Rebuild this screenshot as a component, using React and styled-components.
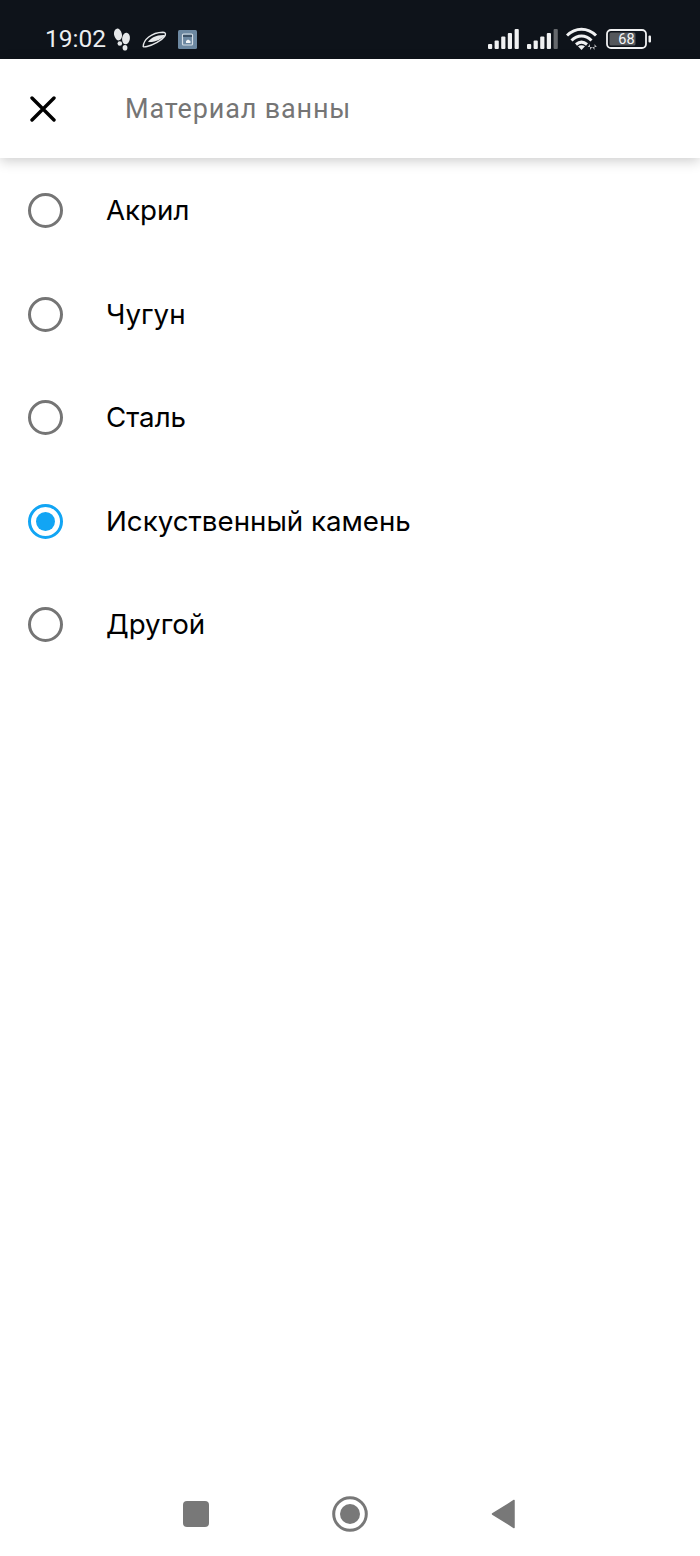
import React from "react";
import styled, { createGlobalStyle } from "styled-components";

const Global = createGlobalStyle`
  html, body { margin: 0; padding: 0; background: #fff; }
  * { box-sizing: border-box; }
`;

const Screen = styled.div`
  width: 700px;
  height: 1556px;
  display: flex;
  flex-direction: column;
  background: #fff;
  font-family: Roboto, "Noto Sans", sans-serif;
  overflow: hidden;
`;

const StatusBar = styled.div`
  height: 59px;
  flex: none;
  background: #0e131a;
  display: flex;
  align-items: center;
  justify-content: space-between;
  padding: 19px 48px 0 45px;
  color: #eceef0;
`;

const StatusGroup = styled.div`
  display: flex;
  align-items: center;
  gap: ${(p) => p.$gap || 0}px;
  padding-left: ${(p) => p.$inset || 0}px;
`;

const Clock = styled.span`
  font-size: 24.5px;
  line-height: 30px;
`;

const Toolbar = styled.header`
  height: 99px;
  flex: none;
  display: flex;
  align-items: center;
  padding-left: 30px;
  background: #fff;
  box-shadow: 0 3px 12px rgba(0, 0, 0, 0.2);
  position: relative;
  z-index: 1;
`;

const Title = styled.h1`
  margin: 0 0 0 69px;
  font-size: 27px;
  font-weight: 400;
  letter-spacing: 0.85px;
  color: #757575;
`;

const List = styled.div`
  display: flex;
  flex-direction: column;
  padding-top: 1px;
`;

const Row = styled.div`
  height: 103.5px;
  display: flex;
  align-items: center;
  padding-left: 28px;
  gap: 43px;
  font-family: Inter, Roboto, sans-serif;
  font-size: 27.7px;
  color: #000;
`;

const Label = styled.span`
  padding-bottom: 1px;
`;

const Radio = styled.span`
  width: 35px;
  height: 35px;
  flex: none;
  border-radius: 50%;
  border: 3.8px solid ${(p) => (p.$on ? "#12a5f4" : "#757575")};
  display: flex;
  align-items: center;
  justify-content: center;
  &::after {
    content: "";
    width: 19px;
    height: 19px;
    border-radius: 50%;
    background: ${(p) => (p.$on ? "#12a5f4" : "transparent")};
  }
`;

const Spacer = styled.div`
  flex: 1;
`;

const NavBar = styled.nav`
  height: 86px;
  flex: none;
  display: flex;
  justify-content: center;
  align-items: flex-start;
  gap: 118px;
  padding-top: 26px;
`;

const NavSlot = styled.span`
  width: 36px;
  height: 36px;
  display: flex;
  align-items: center;
  justify-content: center;
`;

const Steps = () => (
  <svg width="18" height="23" viewBox="0 0 18 23" fill="#e6e8ea">
    <ellipse cx="5" cy="6.500" rx="3.900" ry="6" transform="rotate(-12 5 6.500)" />
    <ellipse cx="6.800" cy="15.500" rx="2.300" ry="2.300" />
    <ellipse cx="13" cy="10.500" rx="3.900" ry="5.800" transform="rotate(8 13 10.500)" />
    <ellipse cx="12" cy="19.700" rx="2.400" ry="2.800" />
  </svg>
);

const Saucer = () => (
  <svg width="25" height="17" viewBox="0 0 25 17">
    <path d="M1.200 15.500C1.500 9 9 1.500 21 1.200c3 0 3 2.300 1.500 4.300-3 4-11 8.500-17.500 10-1.800.4-3.300.6-3.800 0z" fill="none" stroke="#e6e8ea" strokeWidth="1.400" />
    <path d="M6 11C9 6.500 14.500 3.500 23 4c-2.500 4-10 7.500-17 7z" fill="#e6e8ea" />
  </svg>
);

const AppTile = () => (
  <svg width="19" height="19" viewBox="0 0 19 19">
    <rect width="19" height="19" rx="1.500" fill="#6c88a1" />
    <rect x="4.500" y="4" width="10" height="11" rx="1" fill="none" stroke="#d4dde5" strokeWidth="1.200" />
    <path d="M5 5h9v2H5z" fill="#3c5267" />
    <path d="M8 13v-2l2-1.500 2.500 1.500V13z" fill="#f2f4f6" />
  </svg>
);

const Bars = ({ dim }) => (
  <svg width="31" height="20" viewBox="0 0 31 20" fill="#f0f1f2">
    <rect x="0" y="15" width="4.200" height="5" rx="1" />
    <rect x="6.600" y="11.500" width="4.200" height="8.500" rx="1" />
    <rect x="13.200" y="7.500" width="4.200" height="12.500" rx="1" />
    <rect x="19.800" y="4" width="4.200" height="16" rx="1" />
    <rect x="26.600" y="0" width="4.200" height="20" rx="1" fill={dim ? "#66696d" : "#f0f1f2"} />
  </svg>
);

const Wifi = () => (
  <svg width="32" height="24" viewBox="0 0 32 24" fill="none" stroke="#f0f1f2" strokeWidth="3">
    <path d="M1 8.500C9.500 0 21.500 0 30 8.500" />
    <path d="M5.500 13.500C11.500 7.500 19.500 7.500 25.500 13.500" />
    <path d="M10 17.500C13.500 14.500 17.500 14.500 21 17.500" />
    <path d="M15.500 23l-3.500-3.800c2.200-1.300 4.800-1.300 7 0z" fill="#f0f1f2" stroke="none" />
    <path d="M24 23v-6l-2.300 3h4.600zM28.500 17v6l-2.300-3h4.600z" fill="#b5b7ba" stroke="none" />
  </svg>
);

const Battery = () => (
  <svg width="46" height="20" viewBox="0 0 46 20">
    <rect x="1" y="1" width="39" height="18" rx="4" fill="none" stroke="#f0f1f2" strokeWidth="1.800" />
    <rect x="3.500" y="3.500" width="26" height="13" rx="1.500" fill="#55585c" />
    <rect x="42.500" y="6.500" width="2.500" height="7" rx="1" fill="#f0f1f2" />
    <text x="20.500" y="15.300" textAnchor="middle" fontFamily="Roboto, sans-serif" fontSize="14.500" fill="#f4f5f6">68</text>
  </svg>
);

const CloseIcon = () => (
  <svg width="26" height="26" viewBox="0 0 26 26" stroke="#000" strokeWidth="3.400" strokeLinecap="round">
    <path d="M2 2l22 22M24 2L2 24" />
  </svg>
);

const options = [
  { label: "Акрил" },
  { label: "Чугун" },
  { label: "Сталь" },
  { label: "Искуственный камень", on: true },
  { label: "Другой" },
];

export default function App() {
  return (
    <Screen>
      <Global />
      <StatusBar>
        <StatusGroup>
          <Clock>19:02</Clock>
          <StatusGroup $gap={11} $inset={7}>
            <Steps />
            <Saucer />
            <AppTile />
          </StatusGroup>
        </StatusGroup>
        <StatusGroup $gap={8}>
          <Bars />
          <Bars dim />
          <Wifi />
          <Battery />
        </StatusGroup>
      </StatusBar>
      <Toolbar>
        <CloseIcon />
        <Title>Материал ванны</Title>
      </Toolbar>
      <List>
        {options.map((o) => (
          <Row key={o.label}>
            <Radio $on={o.on} />
            <Label>{o.label}</Label>
          </Row>
        ))}
      </List>
      <Spacer />
      <NavBar>
        <NavSlot>
          <svg width="26" height="26" viewBox="0 0 26 26"><rect width="26" height="26" rx="4" fill="#787878" /></svg>
        </NavSlot>
        <NavSlot>
          <svg width="36" height="36" viewBox="0 0 36 36">
            <circle cx="18" cy="18" r="16.300" fill="none" stroke="#787878" strokeWidth="3" />
            <circle cx="18" cy="18" r="10" fill="#787878" />
          </svg>
        </NavSlot>
        <NavSlot>
          <svg width="26" height="30" viewBox="0 0 26 30">
            <path d="M23 1.500v27L1.500 15z" fill="#787878" stroke="#787878" strokeWidth="1.500" strokeLinejoin="round" />
          </svg>
        </NavSlot>
      </NavBar>
    </Screen>
  );
}
